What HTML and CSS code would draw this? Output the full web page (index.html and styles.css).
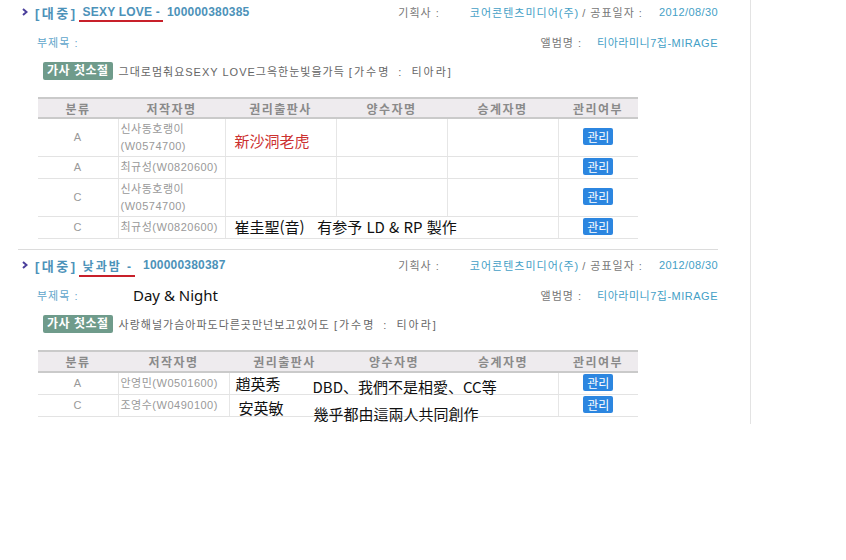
FILE: index.html
```html
<!DOCTYPE html>
<html lang="ko">
<head>
    <meta charset="UTF-8">
    <title>저작물 검색</title>
    <link rel="stylesheet" href="styles.css">
</head>
<body>
    <div class="page">
        <div class="song">
            <div class="song-head">
                <div class="song-title">
                    <svg class="chevron" width="6" height="8" viewBox="0 0 6 8"><polyline points="1,1 4.5,4 1,7" fill="none" stroke="#4b3f9c" stroke-width="2"/></svg>
                    <span class="genre">[대중]</span>
                    <span class="name">SEXY LOVE -</span>
                    <span class="code">100000380385</span>
                </div>
                <div class="meta">
                    <span class="label">기획사 :</span>
                    <span class="value first">코어콘텐츠미디어(주)</span>
                    <span class="label slash">/ 공표일자 :</span>
                    <span class="value date">2012/08/30</span>
                </div>
            </div>
            <div class="song-sub">
                <span class="sub-label">부제목 :</span>
                <div class="meta">
                    <span class="label">앨범명 :</span>
                    <span class="value album">티아라미니7집-MIRAGE</span>
                </div>
            </div>
            <div class="lyric">
                <span class="badge">가사 첫소절</span>
                <span class="lyric-text">그대로멈춰요SEXY LOVE그윽한눈빛을가득 <span class="singer">[가수명 : 티아라]</span></span>
            </div>
            <table class="rights">
                <colgroup>
                    <col style="width: 80px">
                    <col style="width: 107px">
                    <col style="width: 111px">
                    <col style="width: 111px">
                    <col style="width: 111px">
                    <col style="width: 80px">
                </colgroup>
                <thead>
                    <tr>
                        <th>분류</th>
                        <th>저작자명</th>
                        <th>권리출판사</th>
                        <th>양수자명</th>
                        <th>승계자명</th>
                        <th>관리여부</th>
                    </tr>
                </thead>
                <tbody>
                    <tr class="tall">
                        <td class="kind">A</td>
                        <td class="author">신사동호랭이<br>(W0574700)</td>
                        <td><span class="note red">新沙洞老虎</span></td>
                        <td></td>
                        <td></td>
                        <td class="manage"><button class="btn">관리</button></td>
                    </tr>
                    <tr>
                        <td class="kind">A</td>
                        <td class="author">최규성(W0820600)</td>
                        <td></td>
                        <td></td>
                        <td></td>
                        <td class="manage"><button class="btn">관리</button></td>
                    </tr>
                    <tr class="tall">
                        <td class="kind">C</td>
                        <td class="author">신사동호랭이<br>(W0574700)</td>
                        <td></td>
                        <td></td>
                        <td></td>
                        <td class="manage"><button class="btn">관리</button></td>
                    </tr>
                    <tr>
                        <td class="kind">C</td>
                        <td class="author">최규성(W0820600)</td>
                        <td colspan="3"><span class="note">崔圭聖(音)&nbsp;&nbsp; 有参予 LD &amp; RP 製作</span></td>
                        <td class="manage"><button class="btn">관리</button></td>
                    </tr>
                </tbody>
            </table>
        </div>

        <div class="divider"></div>

        <div class="song">
            <div class="song-head">
                <div class="song-title">
                    <svg class="chevron" width="6" height="8" viewBox="0 0 6 8"><polyline points="1,1 4.5,4 1,7" fill="none" stroke="#4b3f9c" stroke-width="2"/></svg>
                    <span class="genre">[대중]</span>
                    <span class="name short">낮과밤 -</span>
                    <span class="code">100000380387</span>
                </div>
                <div class="meta">
                    <span class="label">기획사 :</span>
                    <span class="value first">코어콘텐츠미디어(주)</span>
                    <span class="label slash">/ 공표일자 :</span>
                    <span class="value date">2012/08/30</span>
                </div>
            </div>
            <div class="song-sub">
                <span class="sub-label">부제목 :</span>
                <span class="subtitle">Day &amp; Night</span>
                <div class="meta">
                    <span class="label">앨범명 :</span>
                    <span class="value album">티아라미니7집-MIRAGE</span>
                </div>
            </div>
            <div class="lyric">
                <span class="badge">가사 첫소절</span>
                <span class="lyric-text">사랑해널가슴아파도다른곳만넌보고있어도 <span class="singer">[가수명 : 티아라]</span></span>
            </div>
            <table class="rights second">
                <colgroup>
                    <col style="width: 80px">
                    <col style="width: 111px">
                    <col style="width: 111px">
                    <col style="width: 108px">
                    <col style="width: 110px">
                    <col style="width: 80px">
                </colgroup>
                <thead>
                    <tr>
                        <th>분류</th>
                        <th>저작자명</th>
                        <th>권리출판사</th>
                        <th>양수자명</th>
                        <th>승계자명</th>
                        <th>관리여부</th>
                    </tr>
                </thead>
                <tbody>
                    <tr>
                        <td class="kind">A</td>
                        <td class="author">안영민(W0501600)</td>
                        <td colspan="3" class="notes"><span class="note who first-row">趙英秀</span><span class="note what first-row">DBD、我們不是相愛、CC等</span></td>
                        <td class="manage"><button class="btn">관리</button></td>
                    </tr>
                    <tr>
                        <td class="kind">C</td>
                        <td class="author">조영수(W0490100)</td>
                        <td colspan="3" class="notes"><span class="note who second-row">安英敏</span><span class="note what second-row">幾乎都由這兩人共同創作</span></td>
                        <td class="manage"><button class="btn">관리</button></td>
                    </tr>
                </tbody>
            </table>
        </div>
    </div>
</body>
</html>
```

FILE: styles.css
```css
body {
    margin: 0;
    background-color: #fff;
    font-family: "Liberation Sans", "Noto Sans CJK KR", sans-serif;
    font-size: 11px;
    letter-spacing: 1px;
    color: #777;
}
.page {
    width: 750px;
    height: 424px;
    border-right: 1px solid #e3e3e3;
}
.song {
    width: 700px;
    margin-left: 18px;
}
.song-head {
    display: flex;
    justify-content: space-between;
    align-items: center;
    height: 24px;
}
.song-title {
    display: flex;
    align-items: center;
    padding-left: 4px;
    font-size: 12px;
    font-weight: bold;
    letter-spacing: 0.2px;
    color: #4c92b9;
}
.chevron {
    margin-right: 7px;
}
.genre {
    font-size: 13px;
    letter-spacing: 2.5px;
    margin-right: 5px;
}
.name {
    position: relative;
    margin-right: 7px;
    letter-spacing: 0.2px;
}
.name::after {
    content: "";
    position: absolute;
    left: -4px;
    right: -3px;
    bottom: -3px;
    height: 2px;
    background-color: #c8202a;
}
.name.short {
    letter-spacing: 2px;
    margin-right: 10px;
}
.name.short::after {
    right: -2px;
}
.meta {
    display: flex;
    align-items: center;
    margin-left: auto;
}
.label {
    color: #777;
}
.value {
    color: #44a0c6;
    margin-left: 15px;
}
.value.first {
    margin-left: 30px;
}
.value.date {
    letter-spacing: 0.4px;
    margin-left: 16px;
}
.value.album {
    letter-spacing: 0.5px;
}
.slash {
    margin-left: 3px;
}
.song-sub {
    display: flex;
    align-items: center;
    height: 36px;
}
.sub-label {
    width: 50px;
    padding-left: 19px;
    color: #5fa6cb;
}
.subtitle {
    margin-left: 46px;
    font-family: "Noto Sans", sans-serif;
    font-size: 15px;
    letter-spacing: 0;
    color: #111;
}
.lyric {
    display: flex;
    align-items: center;
    height: 22px;
    padding-left: 25px;
}
.badge {
    background-color: #6f9b8b;
    color: #fff;
    font-size: 12px;
    font-weight: bold;
    letter-spacing: 0.5px;
    padding: 0 4px;
    height: 18px;
    line-height: 18px;
    border-radius: 2px;
    margin-right: 6px;
}
.lyric-text {
    color: #666;
}
.singer {
    letter-spacing: 2px;
    word-spacing: 3px;
}
.rights {
    width: 600px;
    margin: 15px 0 0 20px;
    border-collapse: collapse;
    table-layout: fixed;
    color: #999;
    letter-spacing: 0.5px;
}
.rights th {
    height: 18px;
    padding: 0;
    background-color: #eeebee;
    border-top: 2px solid #cacaca;
    border-bottom: 2px solid #cacaca;
    font-size: 12px;
    font-weight: bold;
    color: #8a8a8a;
    letter-spacing: 1.5px;
    text-align: center;
}
.rights td {
    height: 21px;
    padding: 0 3px;
    border-bottom: 1px solid #e3e3e3;
    border-left: 1px solid #e6e6e6;
    line-height: 17px;
    white-space: nowrap;
    vertical-align: middle;
}
.rights td:first-child {
    border-left: none;
}
.rights tr.tall td {
    height: 37px;
}
.rights .kind {
    text-align: center;
}
.rights .author {
    padding-left: 2px;
}
.rights.second th {
    height: 19px;
}
.rights .manage {
    text-align: center;
}
.btn {
    width: 30px;
    height: 17px;
    padding: 0;
    border: none;
    border-radius: 2px;
    background-color: #2c86e0;
    color: #fff;
    font-family: "Noto Sans CJK KR", sans-serif;
    font-size: 12px;
    line-height: 17px;
    letter-spacing: 0;
}
.divider {
    width: 700px;
    height: 1px;
    margin: 10px 0 3px 18px;
    background-color: #dcdcdc;
}
.note {
    font-family: "Noto Sans CJK TC", sans-serif;
    font-size: 15px;
    letter-spacing: 0;
    color: #111;
    padding-left: 6px;
}
.note.red {
    color: #cc3030;
    position: relative;
    top: 4px;
}
.notes .note {
    position: relative;
    padding-left: 0;
}
.notes .who {
    display: inline-block;
    width: 77px;
    padding-left: 3px;
}
.notes .who.second-row {
    width: 75px;
    padding-left: 6px;
}
.notes .who.first-row {
    top: 1px;
}
.notes .what.first-row {
    top: 4px;
}
.notes .who.second-row {
    top: 3px;
}
.notes .what.second-row {
    top: 9px;
}
```
